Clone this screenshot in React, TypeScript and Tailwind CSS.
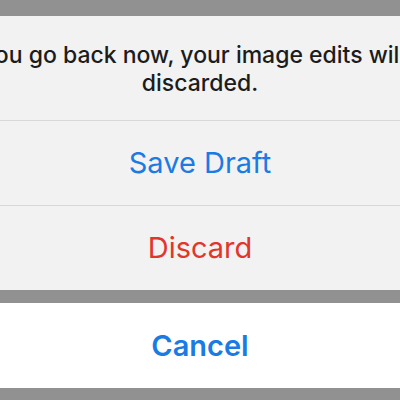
export default function App() {
  return (
    <div className="w-[400px] h-[400px] overflow-hidden bg-[#919191] flex flex-col" style={{ fontFamily: 'Inter, "Noto Sans", sans-serif' }}>
      <div className="h-[16px] shrink-0" />
      <div className="bg-[#f2f2f2] flex flex-col shrink-0">
        <div className="h-[104px] flex flex-col items-center justify-center text-[#1c1c1c] text-[23px] leading-[28px] font-[450] overflow-hidden pt-[2px]">
          <div className="whitespace-nowrap flex justify-center w-[400px]">
            <span className="shrink-0">If you go back now, your image edits will be</span>
          </div>
          <div>discarded.</div>
        </div>
        <div className="h-[1px] bg-[#d8d8d8]" />
        <div className="h-[84px] flex items-center justify-center text-[#1a7be5] text-[29px]">Save Draft</div>
        <div className="h-[1px] bg-[#d8d8d8]" />
        <div className="h-[84px] flex items-center justify-center text-[#e2352c] text-[29px]">Discard</div>
      </div>
      <div className="h-[13px] shrink-0" />
      <div className="h-[85px] bg-white flex items-center justify-center text-[#1a7be5] text-[29px] font-semibold shrink-0">Cancel</div>
    </div>
  );
}
